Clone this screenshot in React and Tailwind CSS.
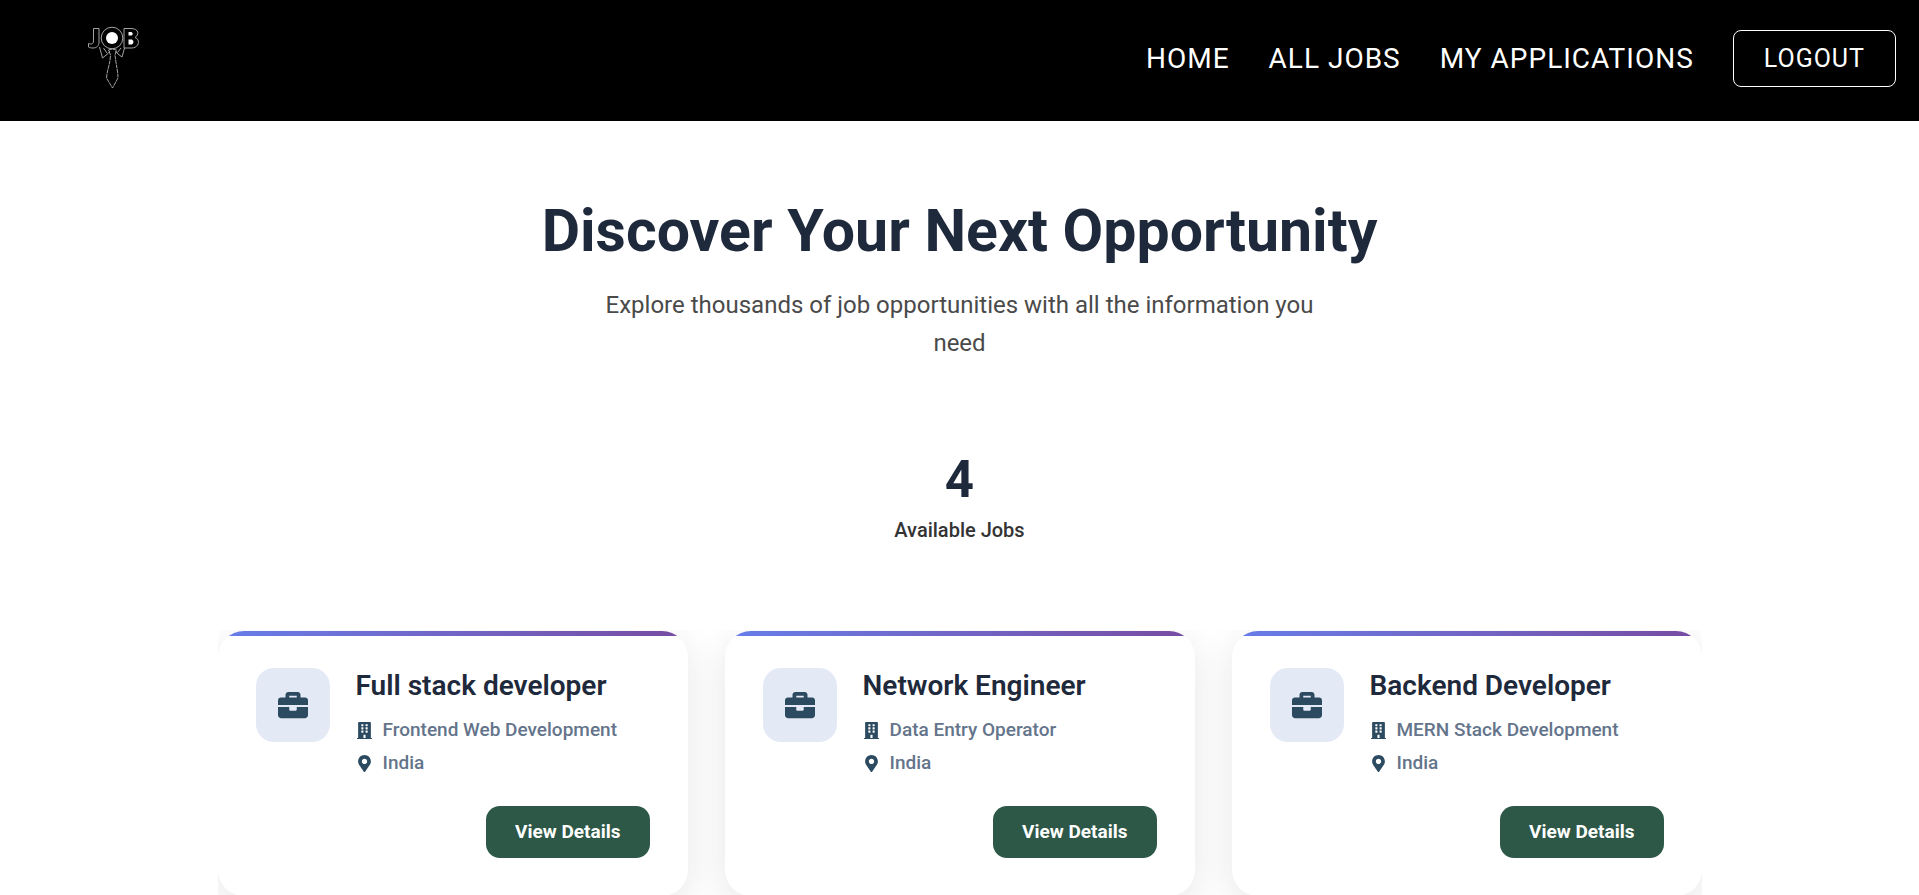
import { FaBriefcase, FaBuilding, FaMapMarkerAlt } from "react-icons/fa";

const links = ["HOME", "ALL JOBS", "MY APPLICATIONS"];

const jobs = [
  { title: "Full stack developer", category: "Frontend Web Development", place: "India" },
  { title: "Network Engineer", category: "Data Entry Operator", place: "India" },
  { title: "Backend Developer", category: "MERN Stack Development", place: "India" },
];

function Logo() {
  return (
    <svg viewBox="0 0 54 66" className="h-[66px] w-[54px]" role="img" aria-label="Job">
      <g fill="none" stroke="#b4b4b4" strokeWidth="0.9" strokeLinejoin="round">
        <path d="M6.5 2.500H12V16C12 20 9.500 22 6 22C4 22 2.500 21.600 1.500 21V17.500C3 18.200 6.500 18.800 6.500 15Z" />
        <circle cx="25" cy="12" r="10.800" />
        <path d="M37 2.500H44C52 2.500 52.500 9 48 11.500C53.500 13 52.500 22 44.500 22H37Z" />
        <path d="M12.500 21L15.500 32L21 27.500L23 25M16.500 22L20 27M37.500 22L35 31L31 28L28.500 25M34 22L30.500 26.500" />
        <path d="M21.500 24L25 23L29.500 24L28 29C29 39 31 45 31 52L25.500 62L19.500 52C20 44 23 39 23.500 29Z" strokeDasharray="4 0.600" />
      </g>
      <g fill="#fff">
        <circle cx="25" cy="12" r="6" />
        <path d="M41.500 6H44.500Q47 7.800 44.500 9.500H41.500Z" />
        <path d="M41.500 13.500H45Q48 16 45 18.500H41.500Z" />
      </g>
    </svg>
  );
}

function Header() {
  return (
    <header className="flex h-[121px] shrink-0 items-center justify-between bg-black pr-[23px] pb-1 pl-[87px] text-white">
      <a href="#home">
        <Logo />
      </a>
      <nav className="flex items-center gap-[39px] tracking-[1px]">
        {links.map((label) => (
          <a key={label} href="#nav" className="text-[28px]">
            {label}
          </a>
        ))}
        <button type="button" className="rounded-lg border border-white px-[30px] pt-2 pb-[7px] text-[25px] leading-10 tracking-[1px]">
          LOGOUT
        </button>
      </nav>
    </header>
  );
}

function JobCard({ job }) {
  return (
    <article className="overflow-hidden rounded-[26px] bg-white shadow-[0_9px_37px_rgba(0,0,0,0.1)]">
      <div className="h-[5px] bg-linear-to-r from-[#667eea] to-[#764ba2]" />
      <div className="px-[38px] pt-8 pb-[38px]">
        <div className="flex items-start gap-[26px]">
          <div className="flex size-[74px] shrink-0 items-center justify-center rounded-[18px] bg-[#e3e9f5] text-[30px] text-[#2c4a60]">
            <FaBriefcase />
          </div>
          <div className="min-w-0">
            <h2 className="text-[28px] leading-9 font-semibold text-[#1e293b]">{job.title}</h2>
            <p className="mt-3 flex items-center gap-2.5 text-[19px] leading-7 font-medium text-[#64748b]">
              <FaBuilding className="size-[17px] text-[#2c4a60]" />
              {job.category}
            </p>
            <p className="mt-[5px] flex items-center gap-2.5 text-[19px] leading-7 font-medium text-[#64748b]">
              <FaMapMarkerAlt className="size-[17px] text-[#2c4a60]" />
              {job.place}
            </p>
          </div>
        </div>
        <div className="mt-[29px] flex justify-end">
          <button type="button" className="rounded-[14px] bg-[#2d5747] px-[29px] py-3 text-[19px] leading-7 font-bold text-white">
            View Details
          </button>
        </div>
      </div>
    </article>
  );
}

export default function App() {
  return (
    <div className="flex h-screen flex-col overflow-hidden bg-white font-[Roboto,sans-serif]">
      <Header />
      <main className="mx-auto w-full max-w-[1484px]">
        <section className="pt-[75px] text-center">
          <h1 className="text-[59px] leading-[70px] font-bold text-[#1e293b]">Discover Your Next Opportunity</h1>
          <p className="mx-auto mt-5 max-w-[720px] text-2xl leading-[38px] text-[#4a4a4a]">
            Explore thousands of job opportunities with all the information you need
          </p>
        </section>
        <section className="pt-[88px] text-center">
          <p className="text-[51px] leading-[60px] font-bold text-[#1e293b]">4</p>
          <p className="mt-1 text-xl leading-8 font-medium text-[#333333]">Available Jobs</p>
        </section>
        <section className="mt-[84px] grid grid-cols-3 gap-[37px] overflow-hidden pt-px pb-10">
          {jobs.map((job) => (
            <JobCard key={job.title} job={job} />
          ))}
        </section>
      </main>
    </div>
  );
}
